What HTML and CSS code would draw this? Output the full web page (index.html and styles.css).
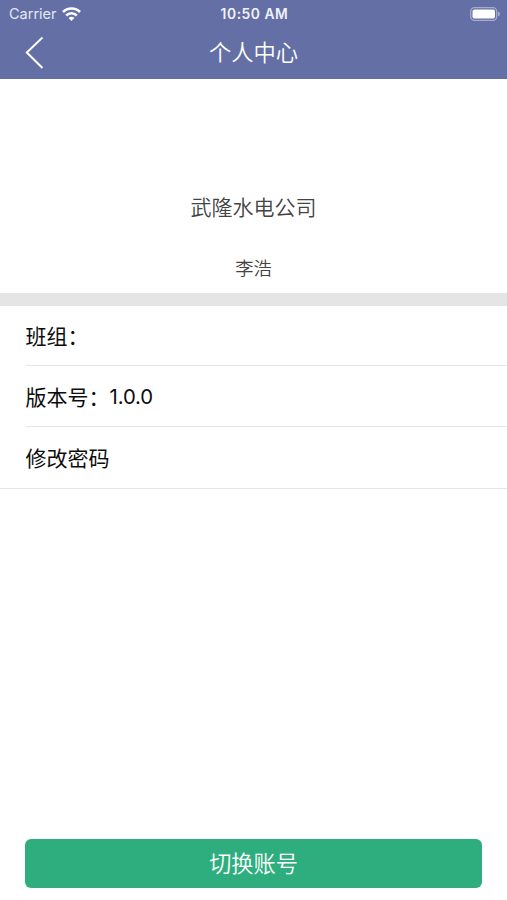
FILE: index.html
```html
<!DOCTYPE html>
<html lang="zh-CN">
<head>
<meta charset="utf-8">
<title>个人中心</title>
<link rel="stylesheet" href="styles.css">
</head>
<body>
<header class="header">
  <div class="status">
    <div class="carrier"><span class="carrier-name">Carrier</span>
      <svg class="wifi" width="19" height="14" viewBox="0 0 19 14" fill="none" stroke="#fff" stroke-width="2.6"><path d="M1 5C5.500.4 13.500.4 18 5"/><path d="M4.200 8.500C7.200 5.500 11.800 5.500 14.800 8.500"/><path d="M6.600 11C8.200 9.400 10.800 9.400 12.400 11L9.500 13.900Z" fill="#fff" stroke="none"/></svg>
    </div>
    <div class="time">10:50 AM</div>
    <svg class="battery" width="30" height="14" viewBox="0 0 30 14"><rect x=".7" y=".7" width="26" height="12.600" rx="3.800" fill="none" stroke="#a5acd2" stroke-width="1.300"/><rect x="2.500" y="2.500" width="22.500" height="9" rx="2" fill="#fff"/><path d="M28 4.500q2 .8 2 2.500T28 9.500z" fill="#a5acd2"/></svg>
  </div>
  <nav class="nav">
    <svg class="back" width="20" height="34" viewBox="0 0 20 34" fill="none" stroke="#fff" stroke-width="2"><path d="M17.500 1.500L1.800 16.500L17.500 32"/></svg>
    <h1 class="title">个人中心</h1>
  </nav>
</header>
<section class="profile">
  <div class="company">武隆水电公司</div>
  <div class="person">李浩</div>
</section>
<ul class="list">
  <li class="row">班组：</li>
  <li class="row">版本号：<span class="version">1.0.0</span></li>
  <li class="row">修改密码</li>
</ul>
<button class="switch">切换账号</button>
</body>
</html>
```

FILE: styles.css
```css
* { box-sizing: border-box; }
body {
  margin: 0;
  height: 900px;
  display: flex;
  flex-direction: column;
  background: #fff;
  font-family: Inter, "Noto Sans CJK SC", sans-serif;
}
.header { height: 79px; background: #6470a5; color: #fff; }
.status {
  height: 27px;
  padding: 0 7px 0 9px;
  display: grid;
  grid-template-columns: 1fr auto 1fr;
  align-items: center;
}
.carrier { display: flex; align-items: center; gap: 5px; }
.carrier-name { font-size: 14.500px; color: #e5e7f2; }
.time { font-size: 13.800px; font-weight: 600; letter-spacing: .55px; color: #f0f2fa; }
.battery { justify-self: end; }
.nav {
  height: 51px;
  padding: 0 25px;
  display: grid;
  grid-template-columns: 20px 1fr 20px;
  align-items: center;
}
.title { margin: 0; font-size: 22.300px; font-weight: 350; text-align: center; line-height: 30px; }
.profile {
  height: 227px;
  padding-top: 113px;
  border-bottom: 13px solid #e5e5e5;
  text-align: center;
  color: #444;
  font-weight: 350;
}
.company { font-size: 21px; line-height: 32px; }
.person { margin-top: 30px; font-size: 18.300px; line-height: 28px; }
.list { margin: 0; padding: 0 0 0 26px; list-style: none; border-bottom: 1px solid #e6e6e6; }
.row {
  height: 61px;
  padding-bottom: 1px;
  display: flex;
  align-items: center;
  font-size: 21px;
  color: #0c0c0c;
  text-indent: -.5px;
}
.row:first-child { height: 59px; }
.row + .row { border-top: 1px solid #e6e6e6; }
.row:last-child { height: 62px; padding-bottom: 2px; }
.version { padding-top: 2px; font-size: 20.300px; letter-spacing: -.1px; text-indent: 0; }
.switch {
  height: 49px;
  margin: auto 25px 12px;
  padding: 0 0 3px;
  border: 0;
  border-radius: 6px;
  background: #2eae7e;
  color: #fff;
  font: 350 22.200px "Noto Sans CJK SC", sans-serif;
}
```
